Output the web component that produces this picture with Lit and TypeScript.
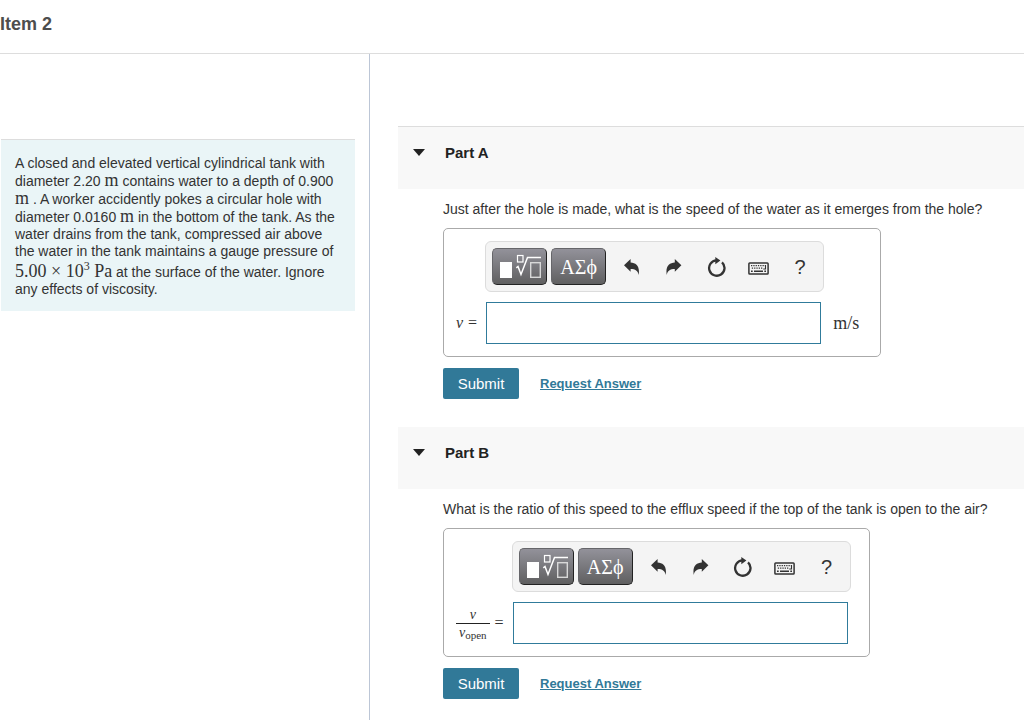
import { LitElement, html, css, svg, nothing, type TemplateResult } from "lit";
import { customElement, property, state } from "lit/decorators.js";

const SERIF = css`"Liberation Serif", "DejaVu Serif", serif`;

const undoIcon = svg`<path d="M0 6.2 6.6 0v3.4c5.6.3 9.6 4 8 12.6-.6-4-3.300-5.900-8-5.900V12.800Z"/>`;
const redoIcon = svg`<path d="M15.400 6.200 8.800 0v3.400c-5.600.3-9.600 4-8 12.600.6-4 3.300-5.900 8-5.900V12.800Z"/>`;
const resetIcon = svg`
  <path d="M9.500 3.300A7.700 7.700 0 1 0 15 5.300" fill="none" stroke="currentColor" stroke-width="2.300"/>
  <path d="M8.300 0 13.400 3.500 8.300 7.200Z"/>`;
const keyboardIcon = svg`
  <rect x=".9" y=".9" width="19.200" height="11.200" rx=".8" fill="none" stroke="currentColor" stroke-width="1.500"/>
  <path d="M3 3.600h14M3.800 6.100h11" fill="none" stroke="currentColor" stroke-width="1.300" stroke-dasharray="1.300 1"/>
  <path d="M17.500 3v4h-2.300" fill="none" stroke="currentColor" stroke-width="1.100"/>
  <path d="M3 9.300h1.700M6 9.300h9M16.300 9.300H18" fill="none" stroke="currentColor" stroke-width="1.500"/>`;

@customElement("math-toolbar")
export class MathToolbar extends LitElement {
  static styles = css`
    :host {
      display: block;
    }
    .bar {
      display: flex;
      align-items: center;
      box-sizing: border-box;
      padding: 6px 2px 6px 6px;
      border: 1px solid #dcdcdc;
      border-radius: 6px;
      background: #f4f4f4;
    }
    .tools {
      display: flex;
      padding-left: 1px;
    }
    button {
      display: flex;
      align-items: center;
      justify-content: center;
      padding: 0;
      cursor: pointer;
    }
    .palette {
      box-sizing: border-box;
      width: 55px;
      height: 37px;
      margin-right: 4px;
      border: 1px solid #66666a;
      border-right-color: #222;
      border-bottom-color: #222;
      border-radius: 5px;
      background: linear-gradient(#93929a, #5f5f60);
      color: #fff;
      font: 20px/20px ${SERIF};
    }
    .tool {
      width: 42px;
      height: 37px;
      border: 0;
      background: none;
      color: #333;
      font: 20px/20px "Liberation Sans", Arial, sans-serif;
    }
    svg {
      display: block;
      fill: currentColor;
    }
  `;

  private tool(label: string, content: TemplateResult | string) {
    return html`<button class="tool" type="button" aria-label=${label}>${content}</button>`;
  }

  render() {
    return html`
      <div class="bar" role="toolbar" aria-label="Equation editor">
        <button class="palette" type="button" aria-label="Templates">
          <svg width="53" height="35" viewBox="1 1 53 35">
            <rect x="8" y="14" width="12" height="16" />
            <g fill="none" stroke="#fff">
              <rect x="25.500" y="7.500" width="5.500" height="6.500" stroke-width="1.200" />
              <path d="M24.300 19.800 26 18.500 29 26.500 35.500 9.500H49" stroke-width="1.500" />
              <rect x="38.700" y="14.700" width="9.600" height="14.600" stroke="#d8d8d8" stroke-width="1.400" />
            </g>
          </svg>
        </button>
        <button class="palette" type="button" aria-label="Symbols">ΑΣϕ</button>
        <div class="tools">
          ${this.tool("Undo", html`<svg width="16" height="16" viewBox="0 0 16 16">${undoIcon}</svg>`)}
          ${this.tool("Redo", html`<svg width="16" height="16" viewBox="0 0 16 16">${redoIcon}</svg>`)}
          ${this.tool("Reset", html`<svg width="19" height="20" viewBox="0 0 19 20">${resetIcon}</svg>`)}
          ${this.tool("Keyboard shortcuts", html`<svg width="21" height="17" viewBox="0 -4 21 17">${keyboardIcon}</svg>`)}
          ${this.tool("Help", "?")}
        </div>
      </div>
    `;
  }
}

@customElement("question-part")
export class QuestionPart extends LitElement {
  @property() heading = "";
  @property() question = "";
  @property() unit = "";
  @property({ attribute: false }) quantity: TemplateResult | typeof nothing = nothing;
  @state() private open = true;

  static styles = css`
    :host {
      display: block;
    }
    .head {
      display: flex;
      align-items: flex-start;
      gap: 19px;
      box-sizing: border-box;
      height: 62px;
      padding: 17px 14px;
      background: #f8f8f8;
    }
    .toggle {
      display: flex;
      align-items: center;
      justify-content: center;
      width: 14px;
      height: 16px;
      padding: 0;
      border: 0;
      background: none;
      color: #222;
      cursor: pointer;
    }
    .toggle svg {
      fill: currentColor;
    }
    h2 {
      margin: 0;
      font-size: 15px;
      line-height: 18px;
      color: #222;
    }
    .body {
      display: flex;
      flex-direction: column;
      align-items: flex-start;
      padding: 11px 14px 0 45px;
    }
    .question {
      display: block;
      margin: 0 0 10px;
    }
    .answer {
      display: grid;
      grid-template-columns: auto auto auto;
      align-items: center;
      row-gap: 10px;
      padding: 12px 18px 12px 0;
      border: 1px solid #aaa;
      border-radius: 5px;
    }
    math-toolbar {
      grid-column: 2;
    }
    .quantity {
      grid-column: 1;
      display: flex;
      align-items: center;
      gap: 5px;
      padding: 0 8px 0 12px;
      font: 16px/18px ${SERIF};
    }
    .fraction {
      display: flex;
      flex-direction: column;
      align-items: center;
      font-size: 14px;
      line-height: 17px;
    }
    .fraction .over {
      align-self: stretch;
      text-align: center;
      border-bottom: 1px solid #222;
    }
    .fraction .under {
      padding: 0 3px;
    }
    .fraction sub {
      font-size: 11px;
      line-height: 0;
      vertical-align: -2px;
    }
    .field {
      box-sizing: border-box;
      height: 42px;
      margin: 0 3px 0 1px;
      padding: 0 8px;
      border: 1px solid #307b9b;
      background: #fff;
      font: 18px/20px ${SERIF};
    }
    .unit {
      min-width: 29px;
      padding-left: 9px;
      font: 18px/20px ${SERIF};
    }
    .actions {
      display: flex;
      align-items: center;
      gap: 21px;
      margin: 11px 0 28px;
    }
    .submit {
      min-width: 76px;
      height: 31px;
      padding: 0 14px;
      border: 0;
      border-radius: 2px;
      background: #317998;
      color: #fff;
      font: 15px/18px "Liberation Sans", Arial, sans-serif;
      cursor: pointer;
    }
    a {
      color: #317998;
      font-size: 13px;
      font-weight: bold;
      line-height: 18px;
    }
  `;

  render() {
    return html`
      <section>
        <div class="head">
          <button
            class="toggle"
            type="button"
            aria-label="Toggle ${this.heading}"
            aria-expanded=${this.open}
            @click=${() => (this.open = !this.open)}
          >
            <svg width="12" height="7" viewBox="0 0 12 7"><path d="M0 0h12L6 7Z" /></svg>
          </button>
          <h2>${this.heading}</h2>
        </div>
        ${this.open
          ? html`<div class="body">
              <p class="question">${this.question}</p>
              <div class="answer">
                <math-toolbar></math-toolbar>
                <label class="quantity" for="value">${this.quantity}<span>=</span></label>
                <input class="field" id="value" type="text" autocomplete="off" />
                ${this.unit ? html`<span class="unit">${this.unit}</span>` : nothing}
              </div>
              <div class="actions">
                <button class="submit" type="button">Submit</button>
                <a href="#answer">Request Answer</a>
              </div>
            </div>`
          : nothing}
      </section>
    `;
  }
}

@customElement("app-root")
export class AppRoot extends LitElement {
  static styles = css`
    :host {
      display: flex;
      flex-direction: column;
      min-height: 100vh;
      background: #fff;
      color: #333;
      font: 14px/18px "Liberation Sans", Arial, sans-serif;
    }
    header {
      padding: 13px 0 18px;
      border-bottom: 1px solid #ddd;
    }
    h1 {
      margin: 0;
      color: #4d4d4d;
      font-size: 18px;
      line-height: 22px;
    }
    .columns {
      display: grid;
      grid-template-columns: 370px 1fr;
      flex: 1;
    }
    aside {
      padding: 85px 14px 0 1px;
      border-right: 1px solid #bcc6d6;
    }
    .problem {
      margin: 0;
      padding: 15px 10px 13px 14px;
      border-top: 1px solid #ddd;
      background: #eaf5f7;
      line-height: 17px;
    }
    .math {
      font-family: ${SERIF};
      font-size: 18px;
      line-height: 17px;
      white-space: nowrap;
    }
    .math sup {
      font-size: 12px;
      line-height: 12px;
    }
    main {
      min-width: 0;
      padding: 72px 0 0 28px;
    }
    .parts {
      border-top: 1px solid #ddd;
    }
  `;

  render() {
    return html`
      <header><h1>Item 2</h1></header>
      <div class="columns">
        <aside>
          <p class="problem">
            A closed and elevated vertical cylindrical tank with diameter 2.20
            <span class="math">m</span> contains water to a depth of 0.900
            <span class="math">m</span> . A worker accidently pokes a circular hole with
            diameter 0.0160 <span class="math">m</span> in the bottom of the tank. As the
            water drains from the tank, compressed air above the water in the tank maintains a
            gauge pressure of <span class="math">5.00 × 10<sup>3</sup> Pa</span> at the surface
            of the water. Ignore any effects of viscosity.
          </p>
        </aside>
        <main>
          <div class="parts">
            <question-part
              heading="Part A"
              question="Just after the hole is made, what is the speed of the water as it emerges from the hole?"
              unit="m/s"
              .quantity=${html`<i>v</i>`}
            ></question-part>
            <question-part
              heading="Part B"
              question="What is the ratio of this speed to the efflux speed if the top of the tank is open to the air?"
              .quantity=${html`<span class="fraction">
                <i class="over">v</i>
                <span class="under"><i>v</i><sub>open</sub></span>
              </span>`}
            ></question-part>
          </div>
        </main>
      </div>
    `;
  }
}
